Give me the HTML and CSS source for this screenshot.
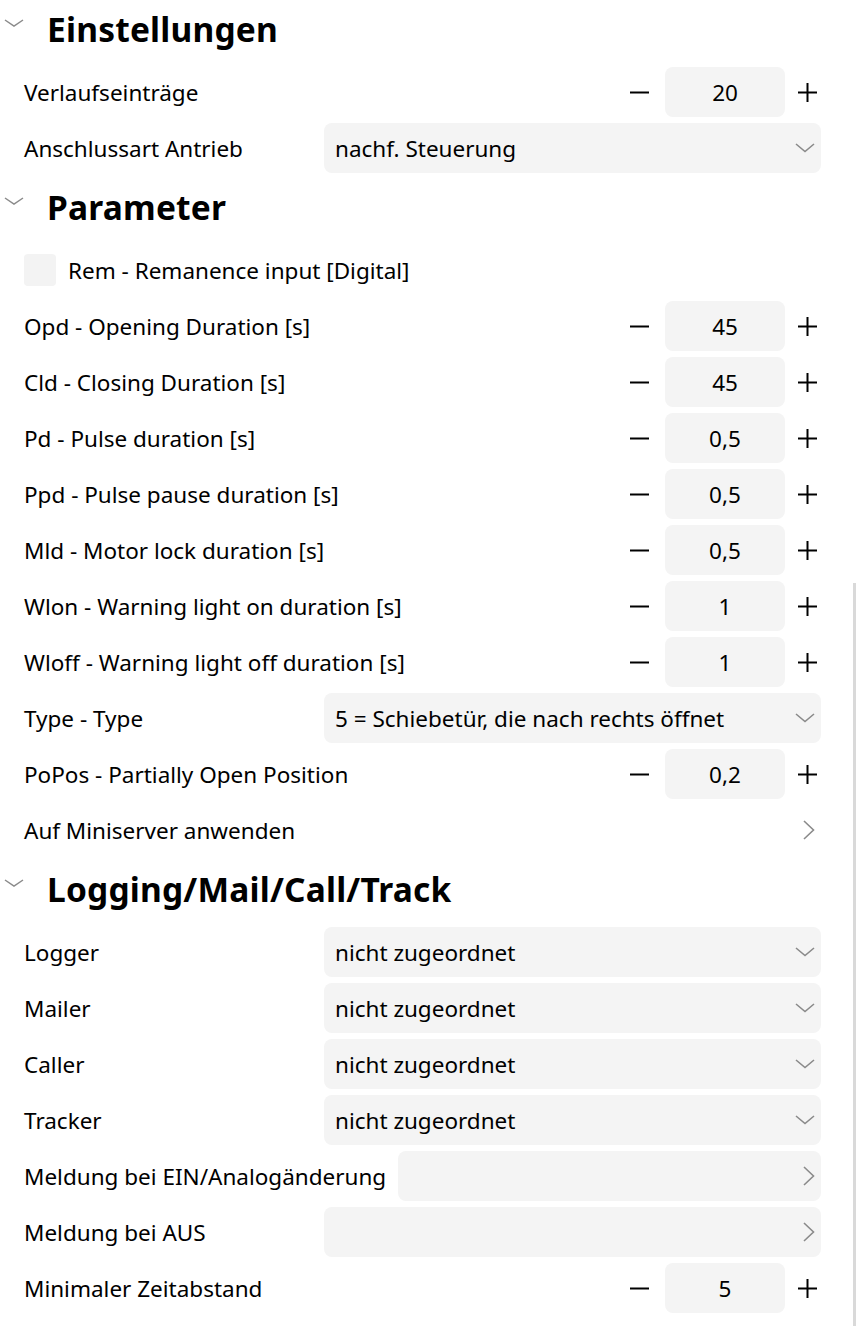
FILE: index.html
```html
<!DOCTYPE html>
<html lang="de">
<head>
<meta charset="utf-8">
<link rel="stylesheet" href="styles.css">
</head>
<body>
<div class="panel">

  <div class="section-head">
    <svg class="head-chev" width="20" height="8" viewBox="0 0 20 8"><polyline points="1,1 10,7 19,1" fill="none" stroke="#8a8a8a" stroke-width="1.5"/></svg>
    <span class="section-title">Einstellungen</span>
  </div>

  <div class="row">
    <span class="label">Verlaufseinträge</span>
    <div class="stepper">
      <svg class="minus" width="19" height="19" viewBox="0 0 19 19"><line x1="0" y1="9.5" x2="19" y2="9.5" stroke="#000" stroke-width="2"/></svg>
      <div class="numbox">20</div>
      <svg class="plus" width="19" height="19" viewBox="0 0 19 19"><line x1="0" y1="9.5" x2="19" y2="9.5" stroke="#000" stroke-width="2"/><line x1="9.5" y1="0" x2="9.5" y2="19" stroke="#000" stroke-width="2"/></svg>
    </div>
  </div>

  <div class="row">
    <span class="label">Anschlussart Antrieb</span>
    <div class="select"><span>nachf. Steuerung</span>
      <svg class="sel-chev" width="20" height="10" viewBox="0 0 20 10"><polyline points="1,1 10,8.5 19,1" fill="none" stroke="#8a8a8a" stroke-width="1.6"/></svg>
    </div>
  </div>

  <div class="section-head">
    <svg class="head-chev" width="20" height="8" viewBox="0 0 20 8"><polyline points="1,1 10,7 19,1" fill="none" stroke="#8a8a8a" stroke-width="1.5"/></svg>
    <span class="section-title">Parameter</span>
  </div>

  <div class="row">
    <span class="checkbox"></span>
    <span class="label check-label">Rem - Remanence input [Digital]</span>
  </div>

  <div class="row">
    <span class="label">Opd - Opening Duration [s]</span>
    <div class="stepper">
      <svg class="minus" width="19" height="19" viewBox="0 0 19 19"><line x1="0" y1="9.5" x2="19" y2="9.5" stroke="#000" stroke-width="2"/></svg>
      <div class="numbox">45</div>
      <svg class="plus" width="19" height="19" viewBox="0 0 19 19"><line x1="0" y1="9.5" x2="19" y2="9.5" stroke="#000" stroke-width="2"/><line x1="9.5" y1="0" x2="9.5" y2="19" stroke="#000" stroke-width="2"/></svg>
    </div>
  </div>

  <div class="row">
    <span class="label">Cld - Closing Duration [s]</span>
    <div class="stepper">
      <svg class="minus" width="19" height="19" viewBox="0 0 19 19"><line x1="0" y1="9.5" x2="19" y2="9.5" stroke="#000" stroke-width="2"/></svg>
      <div class="numbox">45</div>
      <svg class="plus" width="19" height="19" viewBox="0 0 19 19"><line x1="0" y1="9.5" x2="19" y2="9.5" stroke="#000" stroke-width="2"/><line x1="9.5" y1="0" x2="9.5" y2="19" stroke="#000" stroke-width="2"/></svg>
    </div>
  </div>

  <div class="row">
    <span class="label">Pd - Pulse duration [s]</span>
    <div class="stepper">
      <svg class="minus" width="19" height="19" viewBox="0 0 19 19"><line x1="0" y1="9.5" x2="19" y2="9.5" stroke="#000" stroke-width="2"/></svg>
      <div class="numbox">0,5</div>
      <svg class="plus" width="19" height="19" viewBox="0 0 19 19"><line x1="0" y1="9.5" x2="19" y2="9.5" stroke="#000" stroke-width="2"/><line x1="9.5" y1="0" x2="9.5" y2="19" stroke="#000" stroke-width="2"/></svg>
    </div>
  </div>

  <div class="row">
    <span class="label">Ppd - Pulse pause duration [s]</span>
    <div class="stepper">
      <svg class="minus" width="19" height="19" viewBox="0 0 19 19"><line x1="0" y1="9.5" x2="19" y2="9.5" stroke="#000" stroke-width="2"/></svg>
      <div class="numbox">0,5</div>
      <svg class="plus" width="19" height="19" viewBox="0 0 19 19"><line x1="0" y1="9.5" x2="19" y2="9.5" stroke="#000" stroke-width="2"/><line x1="9.5" y1="0" x2="9.5" y2="19" stroke="#000" stroke-width="2"/></svg>
    </div>
  </div>

  <div class="row">
    <span class="label">Mld - Motor lock duration [s]</span>
    <div class="stepper">
      <svg class="minus" width="19" height="19" viewBox="0 0 19 19"><line x1="0" y1="9.5" x2="19" y2="9.5" stroke="#000" stroke-width="2"/></svg>
      <div class="numbox">0,5</div>
      <svg class="plus" width="19" height="19" viewBox="0 0 19 19"><line x1="0" y1="9.5" x2="19" y2="9.5" stroke="#000" stroke-width="2"/><line x1="9.5" y1="0" x2="9.5" y2="19" stroke="#000" stroke-width="2"/></svg>
    </div>
  </div>

  <div class="row">
    <span class="label">Wlon - Warning light on duration [s]</span>
    <div class="stepper">
      <svg class="minus" width="19" height="19" viewBox="0 0 19 19"><line x1="0" y1="9.5" x2="19" y2="9.5" stroke="#000" stroke-width="2"/></svg>
      <div class="numbox">1</div>
      <svg class="plus" width="19" height="19" viewBox="0 0 19 19"><line x1="0" y1="9.5" x2="19" y2="9.5" stroke="#000" stroke-width="2"/><line x1="9.5" y1="0" x2="9.5" y2="19" stroke="#000" stroke-width="2"/></svg>
    </div>
  </div>

  <div class="row">
    <span class="label">Wloff - Warning light off duration [s]</span>
    <div class="stepper">
      <svg class="minus" width="19" height="19" viewBox="0 0 19 19"><line x1="0" y1="9.5" x2="19" y2="9.5" stroke="#000" stroke-width="2"/></svg>
      <div class="numbox">1</div>
      <svg class="plus" width="19" height="19" viewBox="0 0 19 19"><line x1="0" y1="9.5" x2="19" y2="9.5" stroke="#000" stroke-width="2"/><line x1="9.5" y1="0" x2="9.5" y2="19" stroke="#000" stroke-width="2"/></svg>
    </div>
  </div>

  <div class="row">
    <span class="label">Type - Type</span>
    <div class="select"><span>5 = Schiebetür, die nach rechts öffnet</span>
      <svg class="sel-chev" width="20" height="10" viewBox="0 0 20 10"><polyline points="1,1 10,8.5 19,1" fill="none" stroke="#8a8a8a" stroke-width="1.6"/></svg>
    </div>
  </div>

  <div class="row">
    <span class="label">PoPos - Partially Open Position</span>
    <div class="stepper">
      <svg class="minus" width="19" height="19" viewBox="0 0 19 19"><line x1="0" y1="9.5" x2="19" y2="9.5" stroke="#000" stroke-width="2"/></svg>
      <div class="numbox">0,2</div>
      <svg class="plus" width="19" height="19" viewBox="0 0 19 19"><line x1="0" y1="9.5" x2="19" y2="9.5" stroke="#000" stroke-width="2"/><line x1="9.5" y1="0" x2="9.5" y2="19" stroke="#000" stroke-width="2"/></svg>
    </div>
  </div>

  <div class="row">
    <span class="label">Auf Miniserver anwenden</span>
    <svg class="link-chev" width="12" height="20" viewBox="0 0 12 20"><polyline points="1,1 10.5,10 1,19" fill="none" stroke="#8a8a8a" stroke-width="1.6"/></svg>
  </div>

  <div class="section-head">
    <svg class="head-chev" width="20" height="8" viewBox="0 0 20 8"><polyline points="1,1 10,7 19,1" fill="none" stroke="#8a8a8a" stroke-width="1.5"/></svg>
    <span class="section-title">Logging/Mail/Call/Track</span>
  </div>

  <div class="row">
    <span class="label">Logger</span>
    <div class="select"><span>nicht zugeordnet</span>
      <svg class="sel-chev" width="20" height="10" viewBox="0 0 20 10"><polyline points="1,1 10,8.5 19,1" fill="none" stroke="#8a8a8a" stroke-width="1.6"/></svg>
    </div>
  </div>

  <div class="row">
    <span class="label">Mailer</span>
    <div class="select"><span>nicht zugeordnet</span>
      <svg class="sel-chev" width="20" height="10" viewBox="0 0 20 10"><polyline points="1,1 10,8.5 19,1" fill="none" stroke="#8a8a8a" stroke-width="1.6"/></svg>
    </div>
  </div>

  <div class="row">
    <span class="label">Caller</span>
    <div class="select"><span>nicht zugeordnet</span>
      <svg class="sel-chev" width="20" height="10" viewBox="0 0 20 10"><polyline points="1,1 10,8.5 19,1" fill="none" stroke="#8a8a8a" stroke-width="1.6"/></svg>
    </div>
  </div>

  <div class="row">
    <span class="label">Tracker</span>
    <div class="select"><span>nicht zugeordnet</span>
      <svg class="sel-chev" width="20" height="10" viewBox="0 0 20 10"><polyline points="1,1 10,8.5 19,1" fill="none" stroke="#8a8a8a" stroke-width="1.6"/></svg>
    </div>
  </div>

  <div class="row">
    <span class="label">Meldung bei EIN/Analogänderung</span>
    <div class="select"><span></span>
      <svg class="link-chev" width="12" height="20" viewBox="0 0 12 20"><polyline points="1,1 10.5,10 1,19" fill="none" stroke="#8a8a8a" stroke-width="1.6"/></svg>
    </div>
  </div>

  <div class="row">
    <span class="label">Meldung bei AUS</span>
    <div class="select"><span></span>
      <svg class="link-chev" width="12" height="20" viewBox="0 0 12 20"><polyline points="1,1 10.5,10 1,19" fill="none" stroke="#8a8a8a" stroke-width="1.6"/></svg>
    </div>
  </div>

  <div class="row">
    <span class="label">Minimaler Zeitabstand</span>
    <div class="stepper">
      <svg class="minus" width="19" height="19" viewBox="0 0 19 19"><line x1="0" y1="9.5" x2="19" y2="9.5" stroke="#000" stroke-width="2"/></svg>
      <div class="numbox">5</div>
      <svg class="plus" width="19" height="19" viewBox="0 0 19 19"><line x1="0" y1="9.5" x2="19" y2="9.5" stroke="#000" stroke-width="2"/><line x1="9.5" y1="0" x2="9.5" y2="19" stroke="#000" stroke-width="2"/></svg>
    </div>
  </div>

</div>
<div class="scrollbar"></div>
</body>
</html>
```
FILE: styles.css
```css
html, body {
  margin: 0;
  padding: 0;
  background: #ffffff;
}
body {
  font-family: "Noto Sans", "Open Sans", sans-serif;
  color: #000;
  width: 856px;
  height: 1326px;
  overflow: hidden;
}
.panel {
  display: flex;
  flex-direction: column;
  margin-top: -2px;
}
.section-head {
  height: 66px;
  display: flex;
  align-items: flex-start;
  box-sizing: border-box;
  padding-left: 4px;
}
.head-chev {
  margin-top: 21px;
  flex: none;
}
.section-title {
  margin-left: 23px;
  font-size: 33.5px;
  font-weight: 700;
  line-height: 62px;
  letter-spacing: 0.2px;
}
.row {
  height: 56px;
  display: flex;
  align-items: center;
  padding: 0 35px 0 24px;
  box-sizing: border-box;
  font-size: 22.5px;
}
.label {
  min-width: 288px;
  margin-right: 12px;
  white-space: nowrap;
  flex: none;
}
.check-label {
  min-width: 0;
}
.checkbox {
  width: 32px;
  height: 32px;
  border-radius: 4px;
  background: #f3f3f3;
  margin-right: 12px;
  flex: none;
}
.stepper {
  margin-left: auto;
  display: flex;
  align-items: center;
}
.minus {
  margin-right: 16px;
}
.plus {
  margin-left: 13px;
  margin-right: 4px;
}
.numbox {
  width: 120px;
  height: 50px;
  border-radius: 8px;
  background: #f4f4f4;
  display: flex;
  align-items: center;
  justify-content: center;
}
.select {
  flex: 1;
  height: 50px;
  border-radius: 8px;
  background: #f4f4f4;
  display: flex;
  align-items: center;
  justify-content: space-between;
  padding: 0 6px 0 11px;
  box-sizing: border-box;
}
.link-chev {
  margin-left: auto;
  margin-right: 6px;
}
.select .link-chev {
  margin-right: 0;
}
.scrollbar {
  position: fixed;
  left: 853px;
  top: 583px;
  width: 3px;
  bottom: 0;
  background: #d9d9d9;
}
```
